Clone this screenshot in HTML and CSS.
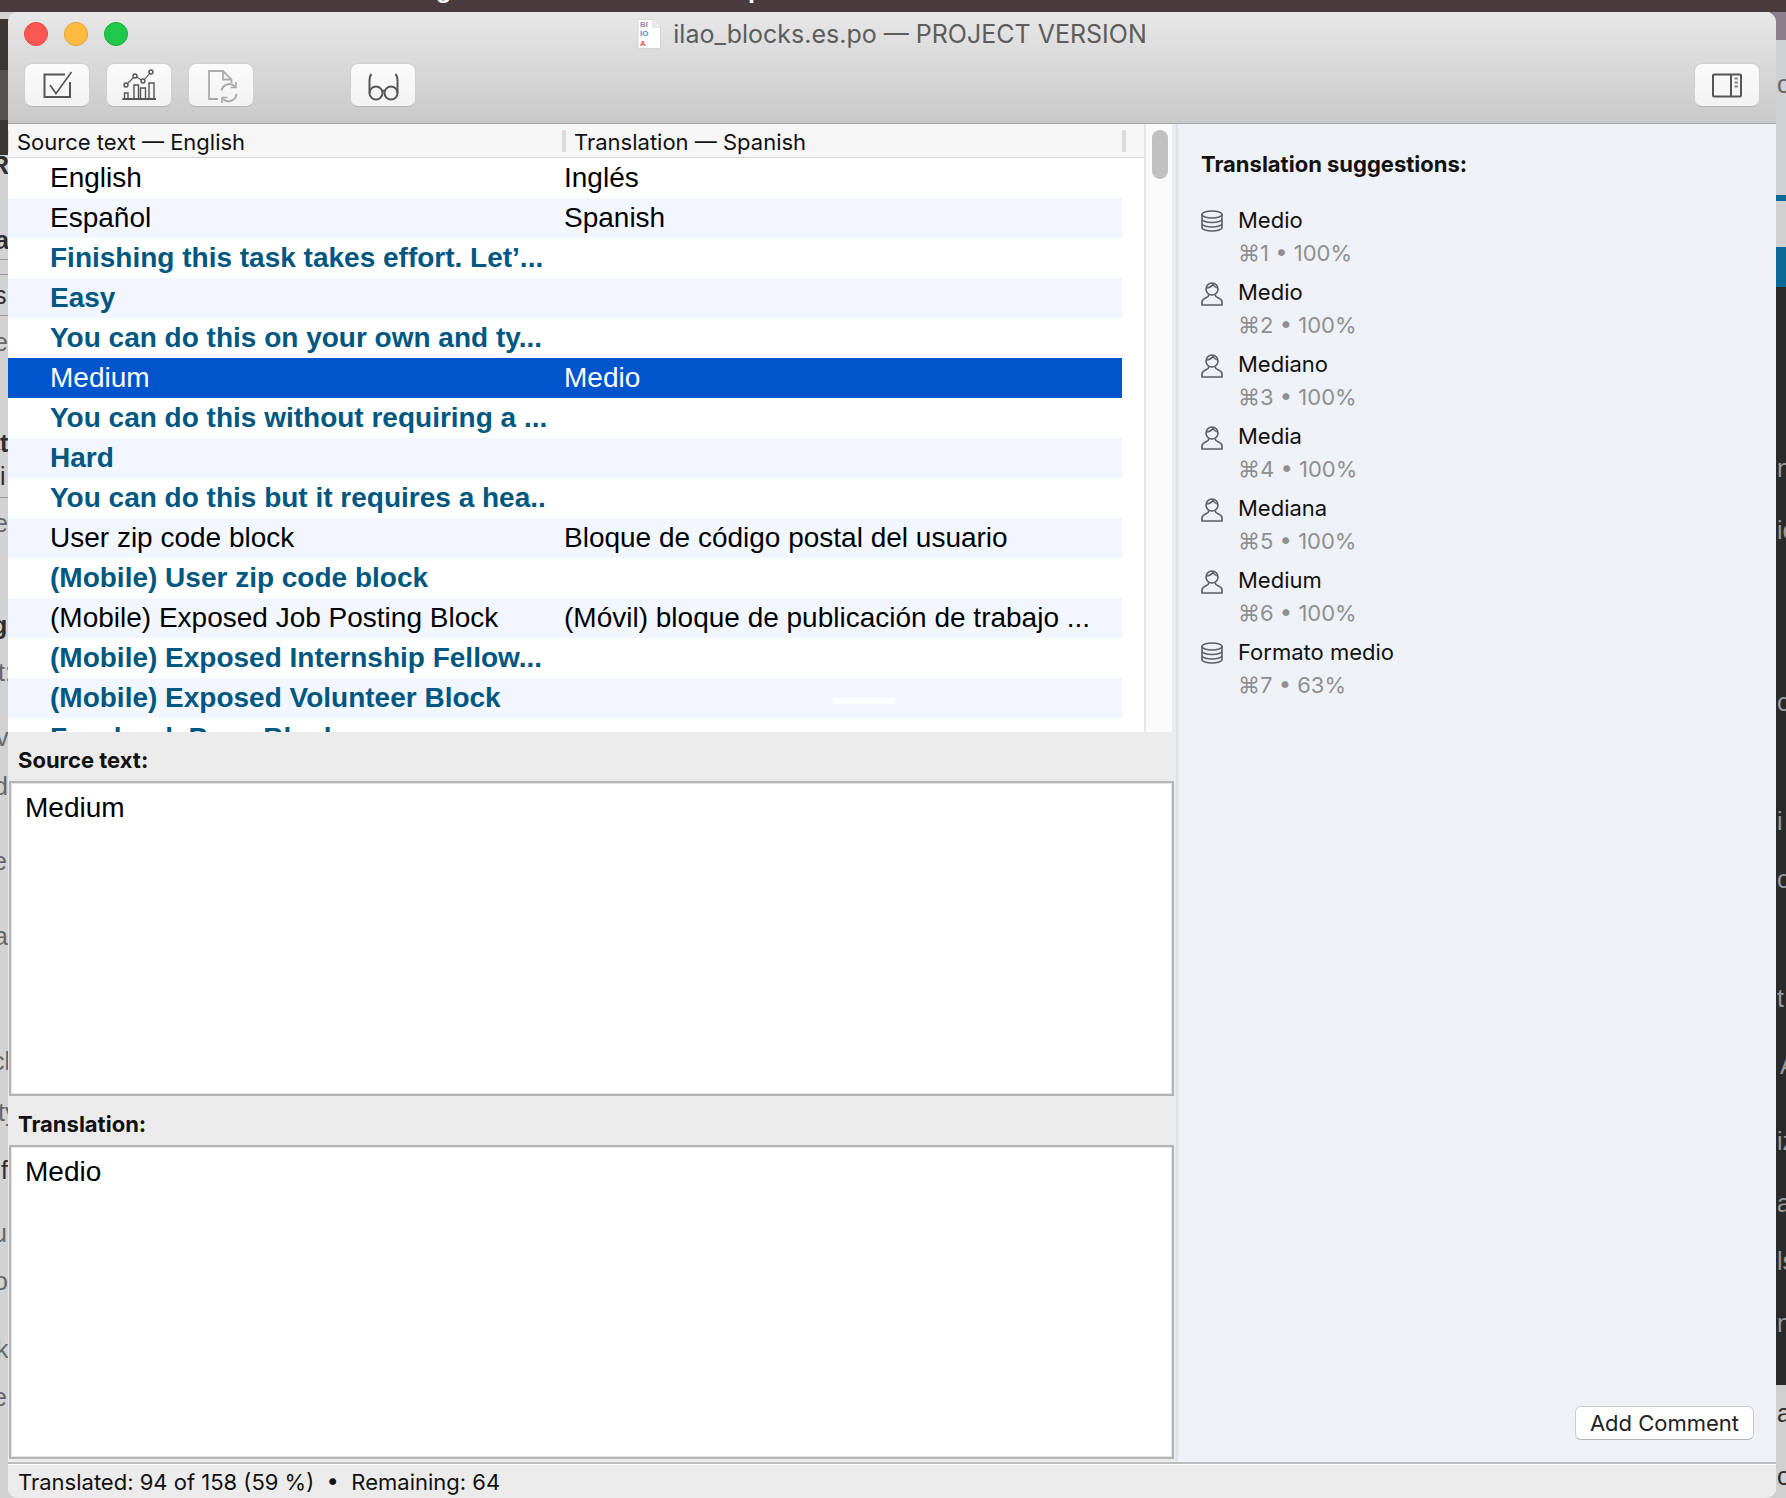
FILE: index.html
```html
<!DOCTYPE html>
<html lang="en">
<head>
<meta charset="utf-8">
<title>ilao_blocks.es.po — PROJECT VERSION</title>
<link rel="stylesheet" href="styles.css">
</head>
<body>
<div class="desktop">
  <svg class="backdrop" width="1786" height="1498" viewBox="0 0 1786 1498" aria-hidden="true">
    <rect x="0" y="0" width="1786" height="1498" fill="#d2d2d2"/>
    <rect x="0" y="19" width="10" height="136" fill="#3a3632"/>
    <rect x="0" y="70" width="10" height="50" fill="#55524e"/>
    <rect x="1770" y="12" width="16" height="28" fill="#8a7f8a"/>
    <rect x="1770" y="40" width="16" height="155" fill="#cfd0d2"/>
    <rect x="1770" y="195" width="16" height="6" fill="#0a6a96"/>
    <rect x="1770" y="201" width="16" height="46" fill="#d0d0d0"/>
    <rect x="1770" y="247" width="16" height="40" fill="#0a6a96"/>
    <rect x="1770" y="287" width="16" height="1098" fill="#2a2a2a"/>
    <rect x="1770" y="1385" width="16" height="113" fill="#d0d0d0"/>
    <rect x="0" y="0" width="1786" height="12" fill="#4a3b3f"/>
    <rect x="0" y="259" width="8" height="1" fill="#999"/>
    <rect x="0" y="274" width="8" height="1" fill="#999"/>
    <rect x="0" y="315" width="8" height="1" fill="#999"/>
    <rect x="0" y="449" width="8" height="1" fill="#999"/>
    <rect x="0" y="497" width="8" height="1" fill="#999"/>
    <g class="bg-white">
      <text x="436" y="-2">g</text>
      <text x="748" y="-2">p</text>
    </g>
    <g class="bg-dark">
      <text class="bg-bold" x="-9" y="174">R</text>
      <text class="bg-bold" x="-5" y="249">a</text>
      <text x="-6" y="304">s</text>
      <text class="bg-soft" x="-6" y="351">e</text>
      <text class="bg-bold" x="0" y="452">t</text>
      <text x="0" y="485">i</text>
      <text class="bg-soft" x="-6" y="532">e</text>
      <text class="bg-bold" x="-8" y="634">g</text>
      <text class="bg-soft" x="-2" y="681">t:</text>
      <text class="bg-soft" x="-4" y="746">v</text>
      <text class="bg-soft" x="-6" y="795">d</text>
      <text class="bg-soft" x="-7" y="870">e</text>
      <text class="bg-soft" x="-6" y="945">a</text>
      <text class="bg-soft" x="-8" y="1070">cl</text>
      <text class="bg-soft" x="-2" y="1121">ty</text>
      <text x="1" y="1179">f</text>
      <text class="bg-soft" x="-7" y="1242">u</text>
      <text class="bg-soft" x="-6" y="1290">o</text>
      <text class="bg-soft" x="-4" y="1358">k</text>
      <text class="bg-soft" x="-7" y="1406">e</text>
    </g>
    <g class="bg-light">
      <text x="1777" y="477">n</text>
      <text x="1777" y="539">ie</text>
      <text x="1777" y="711">or</text>
      <text x="1777" y="830">i</text>
      <text x="1777" y="888">or</text>
      <text x="1777" y="1007">t</text>
      <text x="1780" y="1074">A</text>
      <text x="1777" y="1150">iz</text>
      <text x="1777" y="1212">a</text>
      <text x="1777" y="1270">ls</text>
      <text x="1777" y="1332">ni</text>
    </g>
    <g class="bg-dark">
      <text class="bg-soft" x="1777" y="93">oc</text>
      <text x="1777" y="1422">a;</text>
      <text x="1777" y="1485">oc</text>
    </g>
  </svg>

  <main class="window">
    <header class="chrome">
      <div class="titlebar">
        <div class="lights">
          <span class="light light-red"></span>
          <span class="light light-yellow"></span>
          <span class="light light-green"></span>
        </div>
        <div class="title">
          <svg class="file-icon" width="24" height="30" viewBox="0 0 24 30">
            <path d="M1 .5H16L23.5 8V29.5H1Z" fill="#fff" stroke="#d5d5d5"/>
            <path d="M16 .5V8H23.5" fill="#eee" stroke="#d5d5d5"/>
            <text class="file-a" x="3" y="8">BI</text>
            <text class="file-b" x="3" y="17">IO</text>
            <text class="file-c" x="3" y="27">A</text>
          </svg>
          <span>ilao_blocks.es.po — PROJECT VERSION</span>
        </div>
      </div>
      <div class="toolbar">
        <button class="tool">
          <svg width="66" height="44" viewBox="0 0 66 44" fill="none" stroke="#555" stroke-width="2">
            <path d="M41 11.5H20.5V34H46V19"/>
            <path d="M26 22L32 30.5L47.5 9" stroke-width="1.6"/>
          </svg>
        </button>
        <button class="tool">
          <svg width="66" height="44" viewBox="0 0 66 44" fill="none" stroke="#555" stroke-width="1.4">
            <path d="M16.5 36H50" stroke-width="2"/>
            <path d="M18.5 36V30H22V36M28 36V22H32.5V36M34.5 36V25H39.5V36M43 36V20H48V36"/>
            <path d="M20 22L29 13L37 18L45 9" stroke-width="1.1"/>
            <circle cx="20" cy="22" r="2" fill="#e8e8e8"/>
            <circle cx="29" cy="13" r="2" fill="#e8e8e8"/>
            <circle cx="37" cy="18" r="2" fill="#e8e8e8"/>
            <circle cx="45" cy="9" r="2" fill="#e8e8e8"/>
          </svg>
        </button>
        <button class="tool">
          <svg width="66" height="44" viewBox="0 0 66 44" fill="none" stroke="#aaa" stroke-width="1.8">
            <path d="M30 36H21V8H35L43.5 16.5V20"/>
            <path d="M35 8V16.5H43.5"/>
            <path d="M33.5 27.5A8 8 0 0 1 47 23.5M48.5 31A8 8 0 0 1 35 36" stroke-width="2"/>
            <path d="M48 19V24.5H42.5M34 40V34.5H39.5" stroke-width="1.6"/>
          </svg>
        </button>
        <button class="tool tool-glasses">
          <svg width="66" height="44" viewBox="0 0 66 44" fill="none" stroke="#555" stroke-width="2">
            <circle cx="26" cy="30" r="6.5"/>
            <circle cx="41" cy="30" r="6.5"/>
            <path d="M32 28.5Q33.500 27 35 28.500"/>
            <path d="M19.500 30V17Q19.500 13 21.500 11M47.500 30V17Q47.500 13 45.500 11"/>
          </svg>
        </button>
        <button class="tool tool-side">
          <svg width="66" height="44" viewBox="0 0 66 44" fill="none" stroke="#555" stroke-width="2">
            <rect x="19" y="11.500" width="28" height="22" rx="1"/>
            <path d="M37 11.500V33.500"/>
            <path d="M40.500 15.500H44M40.500 19.500H44M40.500 23.500H44" stroke="#888"/>
          </svg>
        </button>
      </div>
    </header>

    <div class="body">
      <section class="left">
        <div class="table-wrap">
          <div class="table">
            <div class="thead">
              <div class="th">Source text — English</div>
              <div class="th th-second">Translation — Spanish</div>
            </div>
            <div class="rows">
              <div class="row"><span class="cell">English</span><span class="cell cell-tr">Inglés</span></div>
              <div class="row"><span class="cell">Español</span><span class="cell cell-tr">Spanish</span></div>
              <div class="row todo"><span class="cell">Finishing this task takes effort. Let’...</span></div>
              <div class="row todo"><span class="cell">Easy</span></div>
              <div class="row todo"><span class="cell">You can do this on your own and ty...</span></div>
              <div class="row selected"><span class="cell">Medium</span><span class="cell cell-tr">Medio</span></div>
              <div class="row todo"><span class="cell">You can do this without requiring a ...</span></div>
              <div class="row todo"><span class="cell">Hard</span></div>
              <div class="row todo"><span class="cell">You can do this but it requires a hea..</span></div>
              <div class="row"><span class="cell">User zip code block</span><span class="cell cell-tr">Bloque de código postal del usuario</span></div>
              <div class="row todo"><span class="cell">(Mobile) User zip code block</span></div>
              <div class="row"><span class="cell">(Mobile) Exposed Job Posting Block</span><span class="cell cell-tr">(Móvil) bloque de publicación de trabajo ...</span></div>
              <div class="row todo"><span class="cell">(Mobile) Exposed Internship Fellow...</span></div>
              <div class="row todo"><span class="cell">(Mobile) Exposed Volunteer Block</span><span class="glitch"></span></div>
              <div class="row todo"><span class="cell">Facebook Page Block</span></div>
            </div>
          </div>
          <div class="scrollbar"><div class="thumb"></div></div>
        </div>

        <div class="editor">
          <div class="label">Source text:</div>
          <div class="box">Medium</div>
          <div class="label">Translation:</div>
          <div class="box">Medio</div>
        </div>
      </section>

      <aside class="right">
        <h2 class="heading">Translation suggestions:</h2>
        <ul class="suggestions">
          <li class="sug">
            <svg class="sug-icon" width="22" height="22" viewBox="0 0 22 22" fill="none" stroke="#5a5f66" stroke-width="1.6"><ellipse cx="11" cy="4.500" rx="10" ry="3.500"/><path d="M1 4.500V17.500C1 19.500 5.500 21 11 21S21 19.500 21 17.500V4.500M1 9C1 11 5.500 12.500 11 12.500S21 11 21 9M1 13.500C1 15.500 5.500 17 11 17S21 15.500 21 13.500"/></svg>
            <div><div class="sug-text">Medio</div><div class="sug-meta">⌘1 • 100%</div></div>
          </li>
          <li class="sug">
            <svg class="sug-icon" width="22" height="24" viewBox="0 0 22 24" fill="none" stroke="#5a5f66" stroke-width="1.6"><circle cx="11" cy="7" r="6"/><path d="M5.500 6C8.500 6 10.500 4.500 12 2.500C13 4.500 14.500 5.500 16.500 6"/><path d="M7.500 12.500V14C7.500 15.500 1 16 1 20V23H21V20C21 16 14.500 15.500 14.500 14V12.500"/></svg>
            <div><div class="sug-text">Medio</div><div class="sug-meta">⌘2 • 100%</div></div>
          </li>
          <li class="sug">
            <svg class="sug-icon" width="22" height="24" viewBox="0 0 22 24" fill="none" stroke="#5a5f66" stroke-width="1.6"><circle cx="11" cy="7" r="6"/><path d="M5.500 6C8.500 6 10.500 4.500 12 2.500C13 4.500 14.500 5.500 16.500 6"/><path d="M7.500 12.500V14C7.500 15.500 1 16 1 20V23H21V20C21 16 14.500 15.500 14.500 14V12.500"/></svg>
            <div><div class="sug-text">Mediano</div><div class="sug-meta">⌘3 • 100%</div></div>
          </li>
          <li class="sug">
            <svg class="sug-icon" width="22" height="24" viewBox="0 0 22 24" fill="none" stroke="#5a5f66" stroke-width="1.6"><circle cx="11" cy="7" r="6"/><path d="M5.500 6C8.500 6 10.500 4.500 12 2.500C13 4.500 14.500 5.500 16.500 6"/><path d="M7.500 12.500V14C7.500 15.500 1 16 1 20V23H21V20C21 16 14.500 15.500 14.500 14V12.500"/></svg>
            <div><div class="sug-text">Media</div><div class="sug-meta">⌘4 • 100%</div></div>
          </li>
          <li class="sug">
            <svg class="sug-icon" width="22" height="24" viewBox="0 0 22 24" fill="none" stroke="#5a5f66" stroke-width="1.6"><circle cx="11" cy="7" r="6"/><path d="M5.500 6C8.500 6 10.500 4.500 12 2.500C13 4.500 14.500 5.500 16.500 6"/><path d="M7.500 12.500V14C7.500 15.500 1 16 1 20V23H21V20C21 16 14.500 15.500 14.500 14V12.500"/></svg>
            <div><div class="sug-text">Mediana</div><div class="sug-meta">⌘5 • 100%</div></div>
          </li>
          <li class="sug">
            <svg class="sug-icon" width="22" height="24" viewBox="0 0 22 24" fill="none" stroke="#5a5f66" stroke-width="1.6"><circle cx="11" cy="7" r="6"/><path d="M5.500 6C8.500 6 10.500 4.500 12 2.500C13 4.500 14.500 5.500 16.500 6"/><path d="M7.500 12.500V14C7.500 15.500 1 16 1 20V23H21V20C21 16 14.500 15.500 14.500 14V12.500"/></svg>
            <div><div class="sug-text">Medium</div><div class="sug-meta">⌘6 • 100%</div></div>
          </li>
          <li class="sug">
            <svg class="sug-icon" width="22" height="22" viewBox="0 0 22 22" fill="none" stroke="#5a5f66" stroke-width="1.6"><ellipse cx="11" cy="4.500" rx="10" ry="3.500"/><path d="M1 4.500V17.500C1 19.500 5.500 21 11 21S21 19.500 21 17.500V4.500M1 9C1 11 5.500 12.500 11 12.500S21 11 21 9M1 13.500C1 15.500 5.500 17 11 17S21 15.500 21 13.500"/></svg>
            <div><div class="sug-text">Formato medio</div><div class="sug-meta">⌘7 • 63%</div></div>
          </li>
        </ul>
        <button class="comment">Add Comment</button>
      </aside>
    </div>

    <footer class="status">Translated: 94 of 158 (59 %)&nbsp; • &nbsp;Remaining: 64</footer>
  </main>
</div>
</body>
</html>
```
FILE: styles.css
```css
* { box-sizing: border-box; }
html, body { margin: 0; padding: 0; }
body { width: 1786px; height: 1498px; overflow: hidden; background: #d2d2d2; font-family: "Liberation Sans", Arial, sans-serif; }

.desktop { position: relative; width: 1786px; height: 1498px; overflow: hidden; }
.backdrop { position: absolute; left: 0; top: 0; display: block; }
.backdrop text { font-family: "Liberation Sans", sans-serif; font-size: 25px; }
.bg-white text { fill: #fff; font-weight: 700; }
.bg-dark text { fill: #2e2e2e; }
.bg-dark .bg-soft { fill: #666; }
.bg-dark .bg-bold { font-weight: 700; }
.bg-light text { fill: #9a9a9a; }

.window {
  position: absolute; left: 8px; top: 12px; width: 1768px; height: 1486px;
  display: flex; flex-direction: column; overflow: hidden;
  border-radius: 10px; background: #ebebeb;
}

.chrome {
  flex: none; height: 112px;
  background: linear-gradient(#e7e7e7, #c9c9c9);
  border-bottom: 1px solid #a5a5a5;
}
.titlebar { position: relative; height: 51px; display: flex; justify-content: center; padding-top: 7px; }
.lights { position: absolute; left: 16px; top: 10px; display: flex; gap: 16px; }
.light { width: 24px; height: 24px; border-radius: 50%; }
.light-red { background: #fc5753; border: 1px solid #df4744; }
.light-yellow { background: #fdbc40; border: 1px solid #de9f34; }
.light-green { background: #1fc84a; border: 1px solid #1aab3b; }
.title {
  display: flex; align-items: center; gap: 12px; height: 30px;
  font-family: "Inter", sans-serif; font-size: 25px; color: #5c5c5c; white-space: nowrap;
}
.file-icon { flex: none; display: block; }
.file-icon text { font-family: "Liberation Sans", sans-serif; font-size: 8px; font-weight: 700; }
.file-a { fill: #a77fb5; }
.file-b { fill: #4a90c8; }
.file-c { fill: #e0575b; }

.toolbar { display: flex; gap: 16px; padding: 0 16px; }
.tool {
  width: 66px; height: 44px; padding: 0; display: block;
  background: linear-gradient(#fbfbfb, #f2f2f2);
  border: 1px solid #cfcfcf; border-bottom-color: #b8b8b8; border-radius: 8px;
}
.tool svg { display: block; margin: -1px; }
.tool-glasses { margin-left: 80px; }
.tool-side { margin-left: auto; }

.body { flex: 1; min-height: 0; display: flex; }
.left { width: 1168px; flex: none; display: flex; flex-direction: column; }
.right {
  flex: 1; display: flex; flex-direction: column; align-items: flex-start;
  background: #eef2f6; border-left: 2px solid #e2e2e2;
  padding: 24px 22px 22px 23px;
}

.table-wrap { flex: none; height: 608px; display: flex; width: 1164px; overflow: hidden; background: #fff; }
.table { width: 1136px; flex: none; background: #fff; }
.thead {
  height: 34px; display: flex; background: #f6f6f6; border-bottom: 1px solid #d3d3d3;
  font-family: "Inter", sans-serif; font-size: 22px; color: #111;
  padding-top: 6px;
}
.th { height: 22px; line-height: 24px; white-space: nowrap; }
.th:first-child { width: 554px; padding-left: 8px; border-left: 1px solid #ddd; }
.th-second { flex: 1; padding-left: 8px; border-left: 4px solid #dcdcdc; border-right: 4px solid #dcdcdc; margin-right: 18px; }
.rows { height: 574px; overflow: hidden; }
.row {
  position: relative; display: flex; height: 40px; width: 1114px;
  font-size: 28px; line-height: 40px; color: #000; white-space: nowrap;
}
.row:nth-child(even) { background: #f2f6fe; }
.row.todo { color: #00577f; font-weight: 700; }
.row.selected { background: #0054cc; color: #fff; }
.cell { display: block; width: 556px; flex: none; padding-left: 42px; }
.cell-tr { width: auto; padding-left: 0; }
.glitch { position: absolute; left: 825px; top: 20px; width: 62px; height: 6px; background: #fff; }
.scrollbar { flex: 1; background: #fafafa; border-left: 2px solid #e6e6e6; padding: 6px 4px 0 6px; }
.thumb { width: 16px; height: 49px; border-radius: 8px; background: #c1c1c1; }

.editor { flex: 1; display: flex; flex-direction: column; padding-left: 1px; background: #ebebeb; }
.label {
  flex: none; height: 49px; padding: 15px 0 0 9px;
  font-family: "Inter", sans-serif; font-size: 22px; line-height: 26px; font-weight: 700; color: #111;
}
.box {
  flex: none; height: 315px; width: 1165px;
  background: #fff; border: 2px solid #b4b4b4; outline: 1px solid #e4e4e4; outline-offset: -3px;
  padding: 5px 0 0 14px; font-size: 28px; line-height: 40px; color: #000;
}
.box:last-child { height: 314px; }

.heading { margin: 0 0 24px; font-family: "Inter", sans-serif; font-size: 22px; line-height: 32px; font-weight: 700; color: #111; }
.suggestions { list-style: none; margin: 0; padding: 0; }
.sug { display: flex; height: 72px; gap: 15px; font-family: "Inter", sans-serif; font-size: 22px; line-height: 33px; }
.sug-icon { flex: none; display: block; margin-top: 6px; }
.sug-text { color: #111; }
.sug-meta { color: #8f8f8f; }
.comment {
  margin-top: auto; align-self: flex-end; width: 179px; height: 34px; padding: 0;
  background: #fff; border: 1px solid #cdcdcd; border-bottom-color: #b5b5b5; border-radius: 6px;
  font-family: "Inter", sans-serif; font-size: 22px; color: #222;
}

.status {
  flex: none; height: 36px; padding: 3px 0 0 10px;
  background: #ebebeb; border-top: 2px solid #bdbdbd; box-shadow: inset 0 1px 0 #fff;
  font-family: "Inter", sans-serif; font-size: 22px; line-height: 30px; color: #111; white-space: nowrap;
}
```
